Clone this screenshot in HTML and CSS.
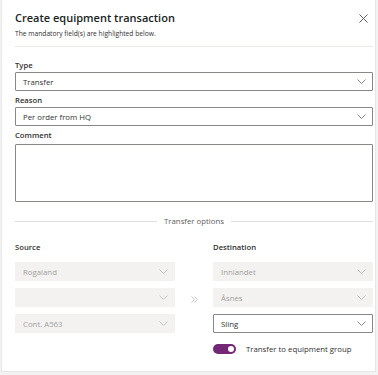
FILE: index.html
```html
<!DOCTYPE html>
<html lang="en">
<head>
  <meta charset="UTF-8">
  <title>Create equipment transaction</title>
  <link rel="stylesheet" href="styles.css">
</head>
<body>
  <div class="panel">
    <div class="header">
      <div class="title-row">
        <h1 class="title">Create equipment transaction</h1>
        <svg class="close" width="9" height="9" viewBox="0 0 9 9"><path d="M0.5 0.5 L8.5 8.5 M8.5 0.5 L0.5 8.5" stroke="#605e5c" stroke-width="1" fill="none"/></svg>
      </div>
      <p class="subtitle">The mandatory field(s) are highlighted below.</p>
    </div>

    <div class="form">
      <label class="label">Type</label>
      <div class="select">
        <span>Transfer</span>
        <svg class="chev" width="9" height="5" viewBox="0 0 9 5"><path d="M0.5 0.5 L4.5 4.5 L8.5 0.5" stroke="#8a8886" fill="none"/></svg>
      </div>

      <label class="label">Reason</label>
      <div class="select">
        <span>Per order from HQ</span>
        <svg class="chev" width="9" height="5" viewBox="0 0 9 5"><path d="M0.5 0.5 L4.5 4.5 L8.5 0.5" stroke="#8a8886" fill="none"/></svg>
      </div>

      <label class="label">Comment</label>
      <textarea class="comment"></textarea>

      <div class="divider"><span>Transfer options</span></div>

      <div class="transfer">
        <div class="col">
          <div class="label">Source</div>
          <div class="select disabled">
            <span>Rogaland</span>
            <svg class="chev" width="9" height="5" viewBox="0 0 9 5"><path d="M0.5 0.5 L4.5 4.5 L8.5 0.5" stroke="#c8c6c4" fill="none"/></svg>
          </div>
          <div class="select disabled">
            <span></span>
            <svg class="chev" width="9" height="5" viewBox="0 0 9 5"><path d="M0.5 0.5 L4.5 4.5 L8.5 0.5" stroke="#c8c6c4" fill="none"/></svg>
          </div>
          <div class="select disabled">
            <span>Cont. A563</span>
            <svg class="chev" width="9" height="5" viewBox="0 0 9 5"><path d="M0.5 0.5 L4.5 4.5 L8.5 0.5" stroke="#c8c6c4" fill="none"/></svg>
          </div>
        </div>

        <div class="arrow">
          <svg width="7" height="7" viewBox="0 0 7 7"><path d="M0.5 0.5 L3.5 3.5 L0.5 6.5 M3.5 0.5 L6.5 3.5 L3.5 6.5" stroke="#c8c6c4" fill="none"/></svg>
        </div>

        <div class="col">
          <div class="label">Destination</div>
          <div class="select disabled">
            <span>Innlandet</span>
            <svg class="chev" width="9" height="5" viewBox="0 0 9 5"><path d="M0.5 0.5 L4.5 4.5 L8.5 0.5" stroke="#c8c6c4" fill="none"/></svg>
          </div>
          <div class="select disabled">
            <span>Åsnes</span>
            <svg class="chev" width="9" height="5" viewBox="0 0 9 5"><path d="M0.5 0.5 L4.5 4.5 L8.5 0.5" stroke="#c8c6c4" fill="none"/></svg>
          </div>
          <div class="select">
            <span>Sling</span>
            <svg class="chev" width="9" height="5" viewBox="0 0 9 5"><path d="M0.5 0.5 L4.5 4.5 L8.5 0.5" stroke="#8a8886" fill="none"/></svg>
          </div>
          <div class="toggle-row">
            <div class="toggle"><div class="knob"></div></div>
            <span>Transfer to equipment group</span>
          </div>
        </div>
      </div>
    </div>
  </div>
</body>
</html>
```

FILE: styles.css
```css
* {
  box-sizing: border-box;
  font-family: 'Open Sans', 'Noto Sans', sans-serif;
}

body {
  margin: 0;
  background: #f3f3f3;
  color: #323130;
}

.panel {
  margin-left: 1px;
  width: 375px;
  height: 372px;
  background: #fff;
  border: 1px solid #e6e6e6;
  border-top: none;
  padding: 0 2px 0 13px;
}

.header {
  padding-top: 8px;
  border-bottom: 1px solid #edebe9;
  padding-bottom: 6px;
}

.title-row {
  display: flex;
  justify-content: space-between;
  align-items: center;
}

.title {
  margin: 0;
  font-size: 11px;
  font-weight: 600;
  line-height: 20px;
  color: #201f1e;
}

.close {
  margin-right: 5px;
}

.subtitle {
  margin: 0;
  font-size: 6.7px;
  line-height: 12px;
  color: #323130;
}

.form {
  display: flex;
  flex-direction: column;
  padding-top: 11px;
}

.label {
  display: block;
  font-size: 7.7px;
  font-weight: 600;
  line-height: 14px;
  margin-top: 2px;
  color: #323130;
}

.form > .label:first-child {
  margin-top: 0;
}

.select {
  height: 19px;
  border: 1px solid #8a8886;
  border-radius: 1px;
  display: flex;
  align-items: center;
  justify-content: space-between;
  padding: 0 6px 0 7px;
  font-size: 7.8px;
  color: #323130;
  background: #fff;
}

.select.disabled {
  border-color: #f3f2f1;
  background: #f3f2f1;
  color: #a19f9d;
}

.comment {
  height: 58px;
  margin-top: 2px;
  border: 1px solid #8a8886;
  border-radius: 1px;
  resize: none;
}

.divider {
  display: flex;
  align-items: center;
  gap: 7px;
  margin-top: 12px;
  font-size: 7.8px;
  line-height: 14px;
  color: #605e5c;
}

.divider::before,
.divider::after {
  content: "";
  flex: 1;
  height: 1px;
  background: #e1dfdd;
}

.transfer {
  display: grid;
  grid-template-columns: 160px 38px 1fr;
  margin-top: 12px;
}

.col {
  display: flex;
  flex-direction: column;
  gap: 7px;
}

.col .label {
  margin: 0 0 1px;
}

.arrow {
  display: flex;
  justify-content: center;
  padding-top: 56px;
}

.toggle-row {
  display: flex;
  align-items: center;
  gap: 10px;
  margin-top: 3px;
  font-size: 7.8px;
  line-height: 12px;
  color: #323130;
}

.toggle {
  width: 23px;
  height: 10px;
  border-radius: 5px;
  background: #742774;
  position: relative;
}

.knob {
  position: absolute;
  right: 2px;
  top: 2px;
  width: 6px;
  height: 6px;
  border-radius: 50%;
  background: #fff;
}
```
